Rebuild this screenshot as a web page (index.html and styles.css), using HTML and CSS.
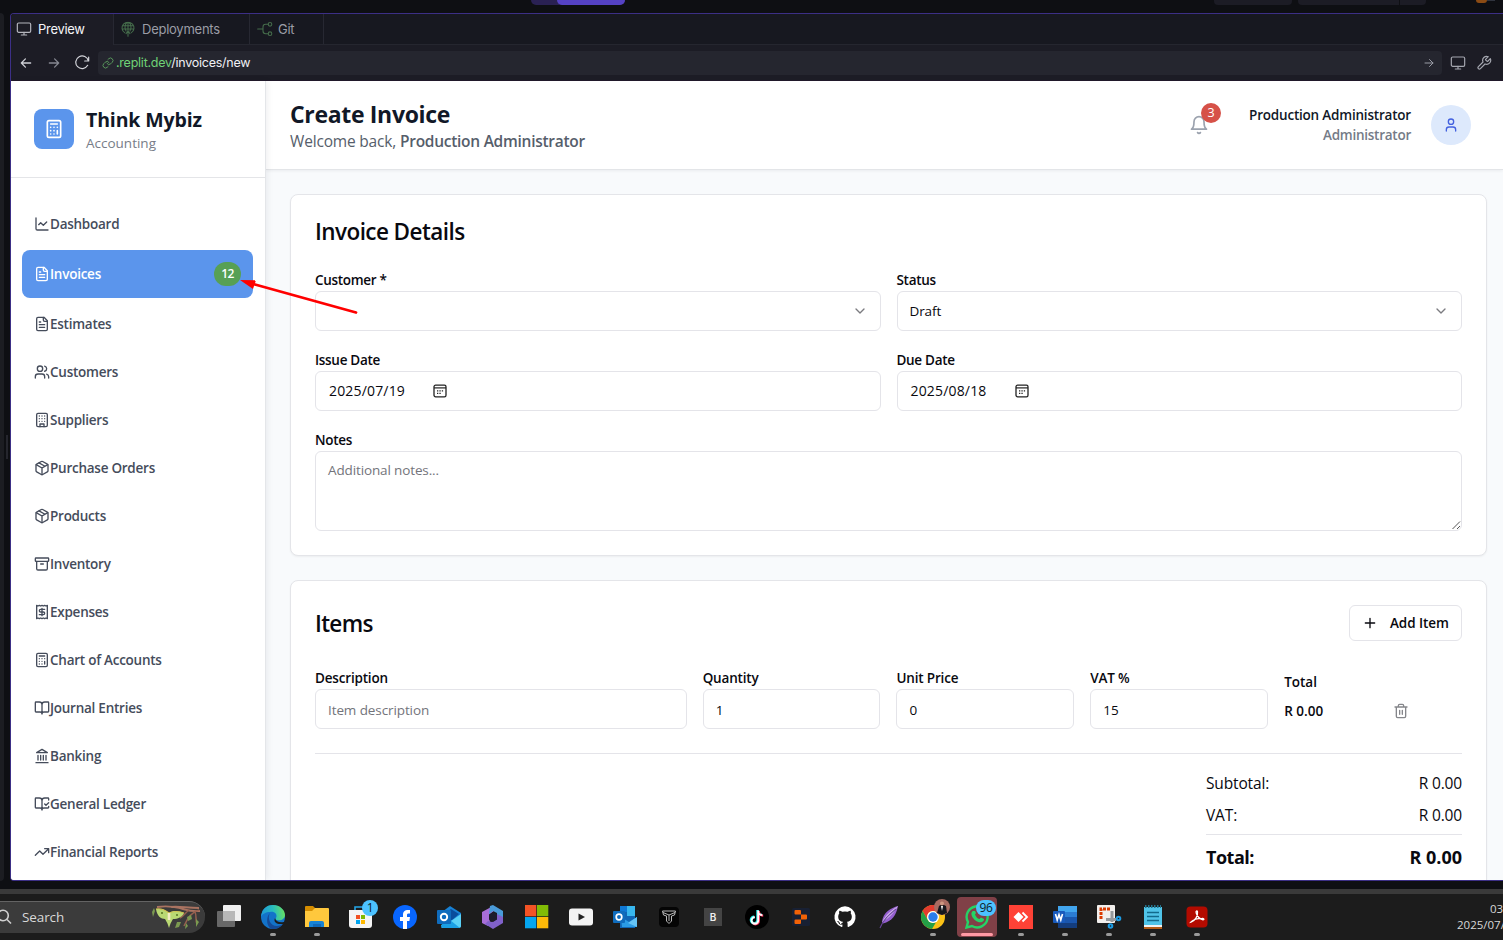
FILE: index.html
```html
<!DOCTYPE html>
<html lang="en">
<head>
<meta charset="utf-8">
<title>Create Invoice</title>
<link rel="stylesheet" href="styles.css">
</head>
<body>
<svg width="0" height="0" class="defs" aria-hidden="true">
  <symbol id="file" viewBox="0 0 24 24"><path d="M15 2H6a2 2 0 0 0-2 2v16a2 2 0 0 0 2 2h12a2 2 0 0 0 2-2V7Z"/><path d="M14 2v4a2 2 0 0 0 2 2h4M10 9H8M16 13H8M16 17H8"/></symbol>
  <symbol id="package" viewBox="0 0 24 24"><path d="M11 21.73a2 2 0 0 0 2 0l7-4A2 2 0 0 0 21 16V8a2 2 0 0 0-1-1.73l-7-4a2 2 0 0 0-2 0l-7 4A2 2 0 0 0 3 8v8a2 2 0 0 0 1 1.73z"/><path d="M12 22V12M3.3 7l8.7 5 8.7-5M7.5 4.27l9 5.15"/></symbol>
  <symbol id="calc" viewBox="0 0 24 24"><rect width="16" height="20" x="4" y="2" rx="2"/><path d="M8 6h8M16 14v4M16 10h.01M12 10h.01M8 10h.01M12 14h.01M8 14h.01M12 18h.01M8 18h.01"/></symbol>
  <symbol id="monitor" viewBox="0 0 24 24"><rect x="2" y="3" width="20" height="14" rx="2"/><path d="M8 21h8M12 17v4"/></symbol>
  <symbol id="chevron" viewBox="0 0 24 24"><path d="m6 9 6 6 6-6"/></symbol>
  <symbol id="calendar" viewBox="0 0 14 14"><rect x="1" y="1.2" width="12" height="11.6" rx="1.6" stroke-width="1.3"/><path d="M1 3.9h12" stroke-width="1.2"/><path d="M4 6.9h1.3M6.4 6.9h1.3M8.8 6.9h1.3M4 9.4h1.3M6.4 9.4h1.3" stroke-width="1.4" stroke-linecap="butt"/></symbol>
</svg>

<div class="topbar">
  <div class="run"><span class="run-menu"></span><span class="run-main"></span></div>
  <div class="top-right"><span class="tb-btn b1"></span><span class="tb-btn b2"></span><span class="tb-btn b3"></span><span class="avatar-a"></span><span class="avatar-b"></span></div>
</div>

<div class="workspace">
  <div class="side-pane"></div>
  <div class="gutter"><span class="grip"></span></div>
  <div class="preview">
    <div class="tabs">
      <div class="tab active"><svg class="i16" viewBox="0 0 24 24"><use href="#monitor"/></svg>Preview</div>
      <div class="tab deploy"><svg class="i16 green" viewBox="0 0 24 24"><path d="M7 17.500A9 8.500 0 1 1 17 17.500M12 23V2M9 15C6 10 7.500 3 12 2c4.500 1 6 8 3 13M4 7h16M3.500 12h17M9 19l3-4 3 4"/></svg>Deployments</div>
      <div class="tab git"><svg class="i16 green" viewBox="0 0 24 24"><path d="M1 12h8M17 5h-4a4 4 0 0 0-4 4v6a4 4 0 0 0 4 4h4"/><circle cx="19.500" cy="5" r="2.700"/><circle cx="19.500" cy="19" r="2.700"/></svg>Git</div>
    </div>
    <div class="addressbar">
      <svg class="i16 nav-back" viewBox="0 0 24 24"><path d="M20 12H4M11 5l-7 7 7 7"/></svg>
      <svg class="i16 nav-fwd" viewBox="0 0 24 24"><path d="M4 12h16M13 5l7 7-7 7"/></svg>
      <svg class="i16 nav-reload" viewBox="0 0 24 24"><path d="M22 3v6h-6M20.500 15.500A9.500 9.500 0 1 1 21.500 9"/></svg>
      <div class="url">
        <svg class="i12 green-l" viewBox="0 0 24 24"><path d="M10 13a5 5 0 0 0 7.540.54l3-3a5 5 0 0 0-7.070-7.070l-1.720 1.710M14 11a5 5 0 0 0-7.540-.54l-3 3a5 5 0 0 0 7.070 7.070l1.710-1.710"/></svg>
        <span class="url-text"><span class="host">.replit.dev</span>/invoices/new</span>
        <svg class="i12 go" viewBox="0 0 24 24"><path d="M4 12h16M13 5l7 7-7 7"/></svg>
      </div>
      <svg class="i16 dev-mon" viewBox="0 0 24 24"><use href="#monitor"/></svg>
      <svg class="i16 dev-wrench" viewBox="0 0 24 24"><path d="M14.700 6.300a1 1 0 0 0 0 1.400l1.600 1.600a1 1 0 0 0 1.400 0l3.770-3.770a6 6 0 0 1-7.940 7.940l-6.910 6.910a2.120 2.120 0 0 1-3-3l6.910-6.910a6 6 0 0 1 7.940-7.940l-3.760 3.760z"/></svg>
    </div>

    <div class="app">
      <aside class="sidebar">
        <div class="brand">
          <div class="logo"><svg class="i20" viewBox="0 0 24 24"><use href="#calc"/></svg></div>
          <div><div class="brand-name">Think Mybiz</div><div class="brand-sub">Accounting</div></div>
        </div>
        <nav class="menu">
          <a class="item"><svg class="i16" viewBox="0 0 24 24"><path d="M3 3v16a2 2 0 0 0 2 2h16M19 9l-5 5-4-4-3 3"/></svg>Dashboard</a>
          <a class="item current"><svg class="i16" viewBox="0 0 24 24"><use href="#file"/></svg>Invoices<span class="count">12</span></a>
          <a class="item"><svg class="i16" viewBox="0 0 24 24"><use href="#file"/></svg>Estimates</a>
          <a class="item"><svg class="i16" viewBox="0 0 24 24"><path d="M16 21v-2a4 4 0 0 0-4-4H6a4 4 0 0 0-4 4v2"/><circle cx="9" cy="7" r="4"/><path d="M22 21v-2a4 4 0 0 0-3-3.870M16 3.130a4 4 0 0 1 0 7.750"/></svg>Customers</a>
          <a class="item"><svg class="i16" viewBox="0 0 24 24"><rect width="16" height="20" x="4" y="2" rx="2"/><path d="M9 22v-4h6v4M8 6h.01M16 6h.01M12 6h.01M12 10h.01M12 14h.01M16 10h.01M16 14h.01M8 10h.01M8 14h.01"/></svg>Suppliers</a>
          <a class="item"><svg class="i16" viewBox="0 0 24 24"><use href="#package"/></svg>Purchase Orders</a>
          <a class="item"><svg class="i16" viewBox="0 0 24 24"><use href="#package"/></svg>Products</a>
          <a class="item"><svg class="i16" viewBox="0 0 24 24"><rect width="20" height="5" x="2" y="3" rx="1"/><path d="M4 8v11a2 2 0 0 0 2 2h12a2 2 0 0 0 2-2V8M10 12h4"/></svg>Inventory</a>
          <a class="item"><svg class="i16" viewBox="0 0 24 24"><path d="M4 2v20l2-1 2 1 2-1 2 1 2-1 2 1 2-1 2 1V2l-2 1-2-1-2 1-2-1-2 1-2-1-2 1Z"/><path d="M16 8h-6a2 2 0 1 0 0 4h4a2 2 0 1 1 0 4H8M12 17.500v-11"/></svg>Expenses</a>
          <a class="item"><svg class="i16" viewBox="0 0 24 24"><use href="#calc"/></svg>Chart of Accounts</a>
          <a class="item"><svg class="i16" viewBox="0 0 24 24"><path d="M12 7v14M3 18a1 1 0 0 1-1-1V4a1 1 0 0 1 1-1h5a4 4 0 0 1 4 4 4 4 0 0 1 4-4h5a1 1 0 0 1 1 1v13a1 1 0 0 1-1 1h-6a3 3 0 0 0-3 3 3 3 0 0 0-3-3z"/></svg>Journal Entries</a>
          <a class="item"><svg class="i16" viewBox="0 0 24 24"><path d="M3 22h18M6 18v-7M10 18v-7M14 18v-7M18 18v-7M12 2l8 5H4z"/></svg>Banking</a>
          <a class="item"><svg class="i16" viewBox="0 0 24 24"><path d="M12 21V7M16 12l2 2 4-4M22 6V4a1 1 0 0 0-1-1h-5a4 4 0 0 0-4 4 4 4 0 0 0-4-4H3a1 1 0 0 0-1 1v13a1 1 0 0 0 1 1h6a3 3 0 0 1 3 3 3 3 0 0 1 3-3h6a1 1 0 0 0 1-1v-1.300"/></svg>General Ledger</a>
          <a class="item"><svg class="i16" viewBox="0 0 24 24"><path d="M22 7l-8.500 8.500-5-5L2 17M16 7h6v6"/></svg>Financial Reports</a>
        </nav>
      </aside>

      <section class="page">
        <header class="page-head">
          <div class="head-left">
            <h1>Create Invoice</h1>
            <p>Welcome back, <b>Production Administrator</b></p>
          </div>
          <div class="bell"><svg class="i20" viewBox="0 0 24 24"><path d="M6 8a6 6 0 0 1 12 0c0 7 3 9 3 9H3s3-2 3-9M10.300 21a1.940 1.940 0 0 0 3.400 0"/></svg><span class="bell-count">3</span></div>
          <div class="who"><div class="who-name">Production Administrator</div><div class="who-role">Administrator</div></div>
          <div class="avatar"><svg class="i16" viewBox="0 0 24 24"><path d="M19 21v-2a4 4 0 0 0-4-4H9a4 4 0 0 0-4 4v2"/><circle cx="12" cy="7" r="4"/></svg></div>
        </header>

        <main class="content">
          <div class="card">
            <h2>Invoice Details</h2>
            <div class="form-grid">
              <div class="field"><label>Customer *</label><div class="input"><svg class="i16 chev" viewBox="0 0 24 24"><use href="#chevron"/></svg></div></div>
              <div class="field"><label>Status</label><div class="input">Draft<svg class="i16 chev" viewBox="0 0 24 24"><use href="#chevron"/></svg></div></div>
              <div class="field"><label>Issue Date</label><div class="input date"><span>2025/07/19</span><svg class="cal" viewBox="0 0 14 14"><use href="#calendar"/></svg></div></div>
              <div class="field"><label>Due Date</label><div class="input date"><span>2025/08/18</span><svg class="cal" viewBox="0 0 14 14"><use href="#calendar"/></svg></div></div>
              <div class="field wide"><label>Notes</label><div class="textarea">Additional notes...<svg class="resize" viewBox="0 0 10 10"><path d="M1.500 9 9 1.500M6 9l3-3"/></svg></div></div>
            </div>
          </div>

          <div class="card items">
            <div class="items-head"><h2>Items</h2><button class="add"><svg class="i16" viewBox="0 0 24 24"><path d="M5 12h14M12 5v14"/></svg>Add Item</button></div>
            <div class="line">
              <div class="field s4"><label>Description</label><div class="input muted">Item description</div></div>
              <div class="field s2"><label>Quantity</label><div class="input">1</div></div>
              <div class="field s2"><label>Unit Price</label><div class="input">0</div></div>
              <div class="field s2"><label>VAT %</label><div class="input">15</div></div>
              <div class="line-total"><div>Total</div><div class="amount">R 0.00</div></div>
              <div class="line-del"><svg class="i16" viewBox="0 0 24 24"><path d="M3 6h18M19 6v14a2 2 0 0 1-2 2H7a2 2 0 0 1-2-2V6M8 6V4a2 2 0 0 1 2-2h4a2 2 0 0 1 2 2v2M10 11v6M14 11v6"/></svg></div>
            </div>
            <div class="summary">
              <div class="totals">
                <div class="row"><span>Subtotal:</span><span class="num">R 0.00</span></div>
                <div class="row"><span>VAT:</span><span class="num">R 0.00</span></div>
                <div class="row grand"><span>Total:</span><span class="num">R 0.00</span></div>
              </div>
            </div>
          </div>
        </main>
      </section>
    </div>
  </div>
</div>

<div class="taskbar">
  <div class="search"><svg class="glass" viewBox="0 0 16 16"><circle cx="7" cy="6.500" r="5.300"/><path d="M11 10.500 15 14.500"/></svg>Search
    <svg class="moth" viewBox="0 0 50 26" fill="none"><path d="M6 3c8-1 14-1 22 1s13 4 21 3M20 3c8-1 16 1 28 1" stroke="#a97361" stroke-width="1.800"/><path d="M48 6c-8 2-12 9-15 16M38 6c-4 3-5 6-9 8M44 8c2 4 0 8 2 12" stroke="#96604f" stroke-width="1.500"/><path d="M18 9C14 5 10 5 5 5c1 7 5 10 9 10 1 2 2 3 3 6l1 3 1-3c1-3 2-4 3-6 5 0 9-2 11-6-5-2-11-3-15 0Z" fill="#b9d873"/><path d="M5 5c5-1 9 1 13 4M33 9c-5-2-10-2-15 0" stroke="#d3c14f" stroke-width="1.200"/><path d="M10 9h2M25 11h2" stroke="#6e8d36" stroke-width="2"/><path d="M18 9v7" stroke="#f3ecc4" stroke-width="2.600"/><path d="m1 8 2-4 1 3-2 6zM26 18l4 0-2 5-4 1zM36 13l4-2 1 4-4 2zM45 15l3 3-3 5zM35 19l2 3-3 3z" fill="#7b9a50"/></svg>
  </div>
  <div class="apps">
    <div class="app-ic"><svg viewBox="0 0 24 24"><rect y="6" width="18" height="16" rx="1" fill="#686868"/><rect x="6" width="18" height="16" rx="1" fill="#f0f0f0"/><path d="M6 6h12v10H6z" fill="#b8b8b8"/></svg></div>
    <div class="app-ic open"><svg viewBox="0 0 24 24"><defs><linearGradient id="eg" x1="0" x2="1" y1="0.300" y2="0.200"><stop stop-color="#1f9ad6"/><stop offset=".5" stop-color="#29bdbd"/><stop offset="1" stop-color="#6be35a"/></linearGradient></defs><circle cx="12" cy="12" r="12" fill="#1373c9"/><path d="M0 12C1 3 6 0 12 0c7 0 12 5 12 10 0 4-4 6-8 5-2 0-2-1-1-2 2-4-2-7-6-6-4 0-8 2-9 5Z" fill="url(#eg)"/><path d="M9 8c-3 5 0 13 7 13 2 0 4-1 6-2-3 4-7 5-10 5-6 0-8-11-3-16Z" fill="#154a97"/><path d="M14 13c-2 4 2 6 5 6h4c1-1 1-2 0-2-4 1-8 0-9-4Z" fill="#1c1c1c"/></svg></div>
    <div class="app-ic open"><svg viewBox="0 0 24 24"><path d="M0 2a1 1 0 0 1 1-1h7l3 3-3 4H0Z" fill="#d58d00"/><path d="M0 6h7l3-3h13a1 1 0 0 1 1 1v18H0z" fill="#ffc83d"/><path d="M4 22v-4a2 2 0 0 1 2-2h11a2 2 0 0 1 2 2v4z" fill="#1682d4"/><path d="M8 19h8v3H8z" fill="#0f68b8"/></svg></div>
    <div class="app-ic"><svg viewBox="0 0 24 24"><path d="M6 6V2h12v4" fill="none" stroke="#24a6e8" stroke-width="1.600"/><path d="M0 5h23v15a3 3 0 0 1-3 3H3a3 3 0 0 1-3-3z" fill="#f4f4f4"/><path d="M7 10h4v4H7z" fill="#f25022"/><path d="M12 10h4v4h-4z" fill="#7fba00"/><path d="M7 15h4v4H7z" fill="#00a4ef"/><path d="M12 15h4v4h-4z" fill="#ffb900"/></svg><span class="badge one">1</span></div>
    <div class="app-ic"><svg viewBox="0 0 24 24"><circle cx="12" cy="12" r="12" fill="#0866ff"/><path d="M10 24v-8H7v-4h3v-2c0-4 2-5.500 7-5v3.500c-2.500 0-3 .3-3 1.700V12h3l-.6 4H14v8z" fill="#fff"/></svg></div>
    <div class="app-ic"><svg viewBox="0 0 24 24"><path d="M5 7 13 1l11 7v14H5z" fill="#1781d5"/><path d="M8 8l6-4 8 5-7 6H8z" fill="#0a4d9c"/><path d="m4 23 20-14v12a2 2 0 0 1-2 2z" fill="#5ad1f6"/><path d="m23 23-10-8-9 5v1a2 2 0 0 0 2 2z" fill="#1aa0e4"/><rect y="5" width="14" height="14" rx="1" fill="#0f6cbd"/><circle cx="7" cy="12" r="3.200" fill="none" stroke="#fff" stroke-width="1.900"/></svg></div>
    <div class="app-ic"><svg viewBox="0 0 24 24"><path d="M12 1 1 7v11l6 3 2-3-1-8 7-6z" fill="#a86ed8"/><path d="m9 1 3-1 10 6v9l-6-4V8l-4-2-4 3z" fill="#4a9bd9"/><path d="M22 12v6l-10 6-8-5 3-3 4 1 5-3v-5z" fill="#8061ca"/><path d="m12 7 4 2.500v5L12 17l-4-2.500v-5z" fill="#1d1d2c"/></svg></div>
    <div class="app-ic"><svg viewBox="0 0 24 24"><path d="M0 0h11.300v11.300H0z" fill="#f35325"/><path d="M12 0h11.300v11.300H12z" fill="#81bc06"/><path d="M0 12h11.300v11.300H0z" fill="#05a6f0"/><path d="M12 12h11.300v11.300H12z" fill="#ffba08"/></svg></div>
    <div class="app-ic"><svg viewBox="0 0 24 24"><rect y="3.500" width="24" height="17" rx="3" fill="#f3f3f3"/><path d="m9.500 8.500 6.500 3.500-6.500 3.500z" fill="#222"/></svg></div>
    <div class="app-ic"><svg viewBox="0 0 24 24"><path d="M7 1h15v22H7z" fill="#1066b5"/><path d="M14 1h8v10h-8z" fill="#38b7ee"/><path d="M7 1h7v6H7z" fill="#0f78d4"/><path d="m8 12 8 5 8-5v10H9z" fill="#2a9be5"/><path d="m24 12-9 6 9 4z" fill="#65c3f5"/><rect y="6" width="12" height="12" rx="1" fill="#0f6cbd"/><circle cx="6" cy="12" r="2.800" fill="none" stroke="#fff" stroke-width="1.700"/></svg></div>
    <div class="app-ic"><svg viewBox="0 0 24 24"><rect x="2" y="2" width="20" height="20" rx="4" fill="#050505"/><path d="M5.500 6h13l-1 4-3 1v5L12 18.500 9.500 16v-5l-3-1zM6 7.500l6 2.500 6-2.500M12 10v6" fill="none" stroke="#b9b9b9" stroke-width="1"/></svg></div>
    <div class="app-ic"><span class="letter">B</span></div>
    <div class="app-ic"><svg viewBox="0 0 24 24"><circle cx="12" cy="12" r="12" fill="#000"/><g fill="none" stroke-width="2.400"><path d="M12.500 5v10a3.300 3.300 0 1 1-3.300-3.300M12.500 6c0 2 2 3.600 4.200 3.600" stroke="#25f4ee"/><path d="M13.800 6v10a3.300 3.300 0 0 1-5.800 2M14 7c0 2 2 3.600 4.200 3.600" stroke="#fe2c55"/><path d="M13.200 5.500v10a3.300 3.300 0 1 1-3.300-3.300M13.200 6.500c0 2 2 3.600 4.200 3.600" stroke="#fff" stroke-width="1.900"/></g></svg></div>
    <div class="app-ic"><svg viewBox="0 0 24 24"><rect x="3" y="3" width="18" height="18" rx="1.500" fill="#182033"/><path d="M6.500 5H11a1 1 0 0 1 1 1v3.500H6.500a1 1 0 0 1-1-1V6a1 1 0 0 1 1-1ZM12 9.500h5a1 1 0 0 1 1 1v3a1 1 0 0 1-1 1h-5zM6.500 14.500H12V18a1 1 0 0 1-1 1H6.500a1 1 0 0 1-1-1v-2.500a1 1 0 0 1 1-1Z" fill="#f26207"/></svg></div>
    <div class="app-ic"><svg viewBox="0 0 24 24"><path d="M12 1.300a10.700 10.700 0 0 0-3.400 20.800c.6.100.8-.2.800-.5v-2c-3 .6-3.600-1.300-3.600-1.300-.5-1.200-1.200-1.600-1.200-1.600-1-.6.100-.6.100-.6 1 .1 1.600 1.100 1.600 1.100 1 1.600 2.500 1.200 3.100.9.100-.7.400-1.200.7-1.400-2.400-.3-4.900-1.200-4.900-5.300 0-1.200.4-2.100 1.100-2.900-.1-.3-.5-1.400.1-2.800 0 0 .9-.3 2.900 1.100a10 10 0 0 1 5.400 0c2-1.400 2.900-1.100 2.900-1.100.6 1.400.2 2.500.1 2.800.7.800 1.100 1.700 1.100 2.900 0 4.100-2.500 5-4.900 5.300.4.300.7 1 .7 2v2.900c0 .3.200.6.800.5A10.700 10.700 0 0 0 12 1.300Z" fill="#fff"/></svg></div>
    <div class="app-ic"><svg viewBox="0 0 24 24"><path d="M21 1C14 3 6 7 5 17l1 1.500C15 16 19 11 21 1Z" fill="#9560cf"/><path d="M21 1C15 5 9 9 5 17c7-4 11-8 16-16Z" fill="#d5b7ef"/><path d="M19 4C12 10 6 15 3 23" fill="none" stroke="#68449b" stroke-width="1.100"/></svg></div>
    <div class="app-ic open"><svg viewBox="0 0 24 24"><circle cx="12" cy="12" r="12" fill="#fbc116"/><path d="M1.600 6A12 12 0 0 1 22.400 6H12a6 6 0 0 0-5.200 9z" fill="#e33b2e"/><path d="M1.600 6 6.800 15A6 6 0 0 0 15 17.200L11 24A12 12 0 0 1 1.600 6Z" fill="#24a047"/><circle cx="12" cy="12" r="6" fill="#fff"/><circle cx="12" cy="12" r="4.700" fill="#2b7de9"/></svg><svg class="face" viewBox="0 0 16 16"><circle cx="8" cy="8" r="8" fill="#a86b61"/><path d="M3 14 5 7l3-2 4 2 1 7-5 2z" fill="#17171c"/><circle cx="8" cy="4.500" r="2" fill="#ce9681"/><path d="m7 7 1 5 1-5z" fill="#fff"/></svg></div>
    <div class="app-ic active-app"><svg viewBox="0 0 24 24"><path d="M1.500 22.500 3 17A10.500 10.500 0 1 1 7 21z" fill="none" stroke="#24d366" stroke-width="2.400"/><path d="M8 6c-5 3 3 13 9 11 2-1 2-2 2-3l-3-1.500-1.500 1.500c-2 0-4-3-4.500-4.500L11 8 10 6z" fill="#24d366"/></svg><span class="badge">96</span></div>
    <div class="app-ic open"><svg viewBox="0 0 24 24"><path d="M0 0h24v24H0z" fill="#ff4236"/><path d="m9.500 7 5 5-5 5-5-5z" fill="#fff"/><path d="m13.500 7.500 4.500 4.500-4.500 4.500" fill="none" stroke="#fff" stroke-width="1.800"/></svg></div>
    <div class="app-ic open"><svg viewBox="0 0 24 24"><path d="M5 1h19v22H5z" fill="#1a56ad"/><path d="M5 1h19v6H5z" fill="#41a5ee"/><path d="M5 7h19v5H5z" fill="#2b7cd3"/><path d="M5 18h19v5H5z" fill="#143d7d"/><rect y="6" width="12" height="12" rx="1" fill="#185abd"/><path d="m2.500 9 1.700 6L6 9.500 7.800 15l1.700-6" fill="none" stroke="#fff" stroke-width="1.600"/></svg></div>
    <div class="app-ic open"><svg class="snip" viewBox="0 0 24 24"><rect width="18" height="18" rx="1" fill="#f2efed"/><path d="M4 14V4h10" fill="none" stroke="#da3b01" stroke-width="3" stroke-dasharray="3 1"/><path d="M9 14.500h10M15 6v11" stroke="#96999c" stroke-width="3"/><g fill="none" stroke="#1c9ce4" stroke-width="2"><circle cx="13.500" cy="21" r="1.800"/><circle cx="21.500" cy="13.500" r="1.800"/></g></svg></div>
    <div class="app-ic open"><svg viewBox="0 0 24 24"><path d="M3 2h18v19H3z" fill="#50c4e8"/><path d="M3 20h18v2H3z" fill="#f2f2f2"/><path d="M3 22h18v2H3z" fill="#b45c16"/><path d="M6 7.500h12M6 11.500h12M6 15.500h12" stroke="#126a8b" stroke-width="1.500"/><path d="M4 1.500h16" stroke="#23738c" stroke-width="3" stroke-dasharray="1.500 1.500"/></svg></div>
    <div class="app-ic open"><svg viewBox="0 0 24 24"><rect x="1.500" y="1.500" width="21" height="21" rx="4" fill="#b30b00"/><path d="M6 17c4-1 7-6 6.500-10-.2-2-2-1-1.300 1 1.300 4 3.800 6 6.800 6.800 1.500 0 1-1.700-1-1.500-4 0-9 1.500-11 3.700Z" fill="none" stroke="#fff" stroke-width="1.300"/></svg></div>
  </div>
  <div class="clock"><span class="time">03</span><span>2025/07/</span></div>
</div>

<svg class="arrow" viewBox="0 0 122 40"><path d="M15 6.500 116 34.500" stroke="#f00" stroke-width="2.800" stroke-linecap="round"/><path d="M0 2 16 2.300 13 11z" fill="#f00"/></svg>
</body>
</html>
```
FILE: styles.css
```css
* { box-sizing: border-box; }
body { margin: 0; width: 1503px; height: 940px; overflow: hidden; position: relative; background: #0e0f13; color: #09090f; font: 13.5px/20px "Open Sans", sans-serif; display: flex; flex-direction: column; }
h1, h2, p { margin: 0; }
svg { flex: none; display: block; }
.defs { position: absolute; }
.i12, .i16, .i20 { fill: none; stroke: currentColor; stroke-width: 2; stroke-linecap: round; stroke-linejoin: round; }
.i12 { width: 12px; height: 12px; }
.i16 { width: 16px; height: 16px; }
.i20 { width: 20px; height: 20px; }

/* IDE chrome */
.topbar { height: 13px; display: flex; justify-content: space-between; padding: 0 8px 0 531px; flex: none; }
.run { display: flex; height: 5px; background: #2a2153; border-radius: 0 0 5px 5px; }
.run-menu { width: 26px; }
.run-main { width: 68px; background: #5542c4; border-radius: 0 0 5px 5px; }
.top-right { display: flex; }
.tb-btn { height: 5px; background: #1c1c25; border-radius: 0 0 4px 4px; }
.b1 { width: 78px; margin-right: 6px; }
.b2 { width: 101px; margin-right: 1px; border-radius: 0 0 0 4px; }
.b3 { width: 26px; margin-right: 50px; border-radius: 0 0 4px 0; }
.avatar-a { width: 11px; height: 3px; background: #8b4b14; border-radius: 0 0 6px 6px; }
.avatar-b { width: 8px; height: 1px; background: #30343e; }
.workspace { display: flex; height: 868px; flex: none; }
.side-pane { width: 4px; background: #1c1d22; border-radius: 0 4px 4px 0; }
.gutter { width: 6px; display: flex; align-items: center; }
.grip { width: 2px; height: 24px; margin-left: 2px; background: #25262d; }
.preview { flex: 1; min-width: 0; border: 1px solid #3c2f86; border-right: 0; border-radius: 4px 0 0 4px; overflow: hidden; background: #1c1c25; display: flex; flex-direction: column; }
.tabs { height: 31px; display: flex; background: #171820; border-bottom: 1px solid #25262f; flex: none; font: 13px/28px Inter, sans-serif; color: #9b9da6; }
.tab { display: flex; align-items: center; border-right: 1px solid #272832; padding-bottom: 1px; }
.tab.active { background: #1c1c25; height: 31px; width: 103px; color: #f5f5f8; padding: 0 0 2px 5px; gap: 6px; letter-spacing: -.3px; }
.active svg { color: #b4b5bd; stroke-width: 1.8; }
.deploy { width: 136px; padding-left: 6px; gap: 6px; letter-spacing: -.25px; }
.git { width: 74px; padding-left: 7px; gap: 5px; letter-spacing: -.25px; }
.green { color: #456c4b; stroke-width: 1.6; }
.addressbar { height: 36px; display: flex; align-items: center; flex: none; border-bottom: 1px solid #21192b; color: #a4a6af; }
.addressbar .i16 { stroke-width: 1.8; }
.nav-back { margin-left: 7px; color: #ced0d6; }
.nav-fwd { margin-left: 12px; color: #858791; }
.addressbar .nav-back, .addressbar .nav-fwd { width: 16px; height: 14px; stroke-width: 2.2; }
.nav-reload { margin-left: 12px; color: #d2d3d9; }
.url { width: 1344px; height: 24px; margin-left: 8px; border-radius: 4px; background: #25262f; display: flex; align-items: center; padding: 0 7px 0 4px; gap: 2px; }
.green-l { color: #58965c; }
.url-text { flex: 1; font: 12.5px/24px Inter, sans-serif; letter-spacing: -.24px; color: #f0f0f4; }
.host { color: #6fd176; }
.go { color: #9a9ca6; }
.dev-mon { margin-left: 8px; }
.dev-wrench { margin-left: 10px; }

/* Application */
.app { flex: 1; min-height: 0; display: flex; background: #f8fafc; }
.sidebar { width: 255px; background: #fff; border-right: 1px solid #e4e6e9; box-shadow: 2px 0 6px rgba(15, 23, 42, .06); overflow: hidden; position: relative; flex: none; }
.brand { height: 97px; border-bottom: 1px solid #e4e5e8; padding: 0 23px; display: flex; align-items: center; gap: 12px; }
.logo { width: 40px; height: 40px; border-radius: 8px; background: #5b95ec; color: #fff; display: grid; place-items: center; }
.brand-name { font-size: 19.5px; line-height: 28px; font-weight: 700; letter-spacing: -.13px; color: #111827; }
.brand-sub { color: #777d88; line-height: 20px; margin-top: -1px; }
.menu { padding: 22px 12px 0 11px; }
.item { height: 48px; padding: 0 12px; border-radius: 8px; display: flex; align-items: center; color: #454c5b; font-weight: 600; letter-spacing: -.25px; }
.current { margin: 2px 0; background: #5b95ec; color: #fff; }
.count { margin-left: auto; width: 27px; height: 24px; border-radius: 12px; background: #57a055; font-size: 12px; line-height: 24px; text-align: center; letter-spacing: -.5px; }
.page { flex: 1; min-width: 0; display: flex; flex-direction: column; }
.page-head { height: 89px; background: #fff; border-bottom: 1px solid #e3e5e8; box-shadow: 0 1px 3px rgba(15, 23, 42, .06); display: flex; align-items: center; padding: 0 32px 0 24px; flex: none; }
.head-left { flex: 1; }
h1 { font-size: 23px; line-height: 32px; letter-spacing: -.33px; color: #111827; }
.head-left p { font-size: 15.5px; line-height: 22px; letter-spacing: -.18px; color: #565e6b; }
.head-left b { font-weight: 600; letter-spacing: -.27px; }
.bell { position: relative; color: #9ba2ae; margin-right: 40px; }
.bell-count { position: absolute; left: 12px; top: -12px; width: 20px; height: 20px; border-radius: 50%; background: #d65148; color: #fff; font-size: 12.5px; line-height: 20px; text-align: center; }
.who { text-align: right; font-weight: 600; }
.who-name { color: #111827; letter-spacing: -.2px; }
.who-role { color: #747b87; letter-spacing: -.25px; }
.avatar { width: 40px; height: 40px; border-radius: 50%; background: #dde9fc; color: #4361df; display: grid; place-items: center; margin-left: 20px; }
.content { flex: 1; min-height: 0; overflow: hidden; padding: 24px 16px 0 24px; display: flex; flex-direction: column; gap: 24px; }
.card { background: #fff; border: 1px solid #e4e5e9; border-radius: 8px; box-shadow: 0 1px 2px rgba(0, 0, 0, .05); padding: 24px; height: 362px; flex: none; }
h2 { font-size: 22.5px; line-height: 26px; font-weight: 600; letter-spacing: -.57px; }
.form-grid { display: grid; grid-template-columns: 1fr 1fr; column-gap: 16px; row-gap: 19px; margin-top: 25px; }
.wide { grid-column: 1 / 3; }
.field label { display: block; height: 21px; line-height: 20px; font-weight: 600; letter-spacing: -.3px; }
.s2 label, .s4 label { letter-spacing: -.18px; }
.input { height: 40px; border: 1px solid #e4e4e9; border-radius: 6px; padding: 0 12px; display: flex; align-items: center; letter-spacing: -.1px; }
.chev { margin-left: auto; color: #7b7b80; }
.date { padding-left: 13px; gap: 28px; font-size: 14px; letter-spacing: .17px; }
.cal { width: 14px; height: 14px; fill: none; stroke: #222; }
.textarea { height: 80px; border: 1px solid #e4e4e9; border-radius: 6px; padding: 8px 12px; color: #73747b; letter-spacing: -.13px; position: relative; }
.resize { position: absolute; right: 0; bottom: 0; width: 10px; height: 10px; stroke: #555; fill: none; stroke-width: 1; }
.items-head { display: flex; justify-content: space-between; }
.items-head h2 { margin-top: 6px; letter-spacing: -.7px; }
.add { height: 36px; width: 113px; border: 1px solid #e4e4e9; border-radius: 6px; background: #fff; padding: 0 12px 1px; display: flex; align-items: center; gap: 12px; font: 600 13.5px "Open Sans", sans-serif; letter-spacing: -.07px; color: #09090f; white-space: nowrap; }
.line { display: grid; grid-template-columns: repeat(12, 1fr); column-gap: 16px; margin-top: 27px; padding-bottom: 24px; border-bottom: 1px solid #e4e4e9; }
.s4 { grid-column: span 4; }
.s2 { grid-column: span 2; }
.muted { color: #73747b; }
.items .input { padding-top: 2px; }
.line-total { padding-top: 4px; font-weight: 600; }
.amount { margin-top: 9px; }
.line-del { padding: 35px 12px 0; color: #85868b; }
.summary { display: flex; justify-content: flex-end; padding-top: 17px; }
.totals { width: 256px; }
.row { display: flex; justify-content: space-between; font-size: 15.5px; line-height: 24px; margin-bottom: 8px; letter-spacing: -.15px; }
.grand { border-top: 1px solid #e4e4e9; padding-top: 8px; margin-top: -1px; font-size: 18px; line-height: 28px; font-weight: 700; letter-spacing: -.5px; }
.grand .num { letter-spacing: 0; }

/* Taskbar */
.taskbar { flex: 1; margin-top: 8px; border-top: 5px solid #3a3a3a; background: #1c1c1c; display: flex; color: #d8d8d8; }
.search { width: 205px; height: 32px; margin-top: 7px; border-radius: 0 16px 16px 0; background: #3b3b3b; border-top: 1px solid #636363; display: flex; align-items: center; padding: 0 4px 1px 0; letter-spacing: -.1px; flex: none; }
.glass { width: 16px; height: 16px; margin: 0 10px 0 -4px; fill: none; stroke: #d0d0d0; stroke-width: 1.6; }
.moth { width: 50px; height: 26px; margin-left: auto; }
.apps { display: flex; margin-left: 2px; flex: 1; }
.app-ic { width: 44px; height: 46px; position: relative; display: grid; place-items: center; flex: none; }
.app-ic > svg { width: 24px; height: 24px; position: relative; }
.app-ic > .snip { overflow: visible; }
.open::after { content: ""; position: absolute; left: 19px; top: 39px; width: 6px; height: 3px; border-radius: 2px; background: #9a9a9a; }
.badge { position: absolute; left: 21px; top: 6px; width: 20px; height: 16px; border-radius: 8px; background: #4cc2ff; color: #10202b; font-size: 12px; line-height: 16px; text-align: center; letter-spacing: -.3px; }
.one { left: 23px; width: 16px; }
.app-ic > .face { position: absolute; left: 23px; top: 5px; width: 16px; height: 16px; }
.active-app::before { content: ""; position: absolute; left: 2px; top: 3px; width: 40px; height: 40px; border-radius: 4px; background: #804047; }
.active-app::after { content: ""; position: absolute; left: 6px; top: 39px; width: 32px; height: 3px; border-radius: 2px; background: #ff99a4; }
.letter { width: 18px; height: 18px; background: #444; color: #eee; font: 600 10px/18px Inter, sans-serif; text-align: center; }
.clock { width: 46px; flex: none; overflow: hidden; display: flex; flex-direction: column; font-size: 11.5px; line-height: 16px; padding-top: 7px; white-space: nowrap; }
.time { margin-left: 33px; }

.arrow { position: absolute; left: 240px; top: 278px; width: 122px; height: 40px; fill: none; }
```
